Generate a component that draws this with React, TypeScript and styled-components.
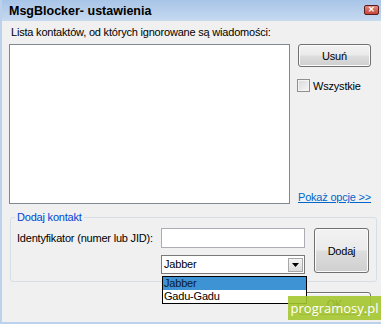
import React from "react";
import styled, { createGlobalStyle } from "styled-components";

const GlobalStyle = createGlobalStyle`
  html, body { margin: 0; padding: 0; background: #f0f0f0; }
  body { font-family: "Liberation Sans", Arial, sans-serif; font-size: 11px; color: #000; letter-spacing: -0.2px; }
  * { box-sizing: border-box; }
`;

const Window = styled.div`
  position: relative;
  width: 381px;
  height: 324px;
  background: #f0f0f0;
  border-left: 2px solid #bcd2ec;
  border-bottom: 2px solid #bcd2ec;
  display: flex;
  flex-direction: column;
  overflow: hidden;
`;

const TitleBar = styled.div`
  height: 21px;
  flex: none;
  background: linear-gradient(#a8c4e7, #c6daf0);
  display: flex;
  align-items: center;
  justify-content: space-between;
  padding: 0 0 0 7px;
  margin-left: -2px;
`;

const Title = styled.span`
  font-weight: bold;
  font-size: 12.5px;
  letter-spacing: 0;
  color: #000;
  padding-left: 2px;
`;

const CloseButton = styled.div`
  width: 15px;
  height: 10px;
  margin-right: 2px;
  margin-top: -2px;
  border: 1px solid #5a1c1c;
  border-radius: 2px;
  background: linear-gradient(#e08c7e, #c5463a);
  color: #fff;
  font-size: 8px;
  line-height: 8px;
  text-align: center;
  font-weight: bold;
`;

const Body = styled.div`
  flex: 1;
  display: flex;
  flex-direction: column;
  padding: 4px 4px 0 7px;
`;

const TopSection = styled.div`
  display: grid;
  grid-template-columns: 281px 1fr;
  grid-template-rows: auto 160px;
  row-gap: 5px;
`;

const Label = styled.div<{ $indent?: number }>`
  line-height: 14px;
  padding-left: ${(p) => p.$indent ?? 0}px;
  white-space: nowrap;
`;

const FieldLabel = styled(Label)`
  align-self: center;
`;

const ListBox = styled.div`
  grid-column: 1;
  grid-row: 2;
  background: #fff;
  border: 1px solid #828790;
`;

const SideColumn = styled.div`
  grid-column: 2;
  grid-row: 2;
  display: flex;
  flex-direction: column;
  padding-left: 8px;
`;

const Button = styled.div<{ $w: number; $h: number }>`
  width: ${(p) => p.$w}px;
  height: ${(p) => p.$h}px;
  border: 1px solid #707070;
  border-radius: 3px;
  background: linear-gradient(#f2f2f2 0%, #ebebeb 48%, #dddddd 52%, #cfcfcf 100%);
  box-shadow: inset 0 0 0 1px #fbfbfb;
  display: flex;
  align-items: center;
  justify-content: center;
  font-size: 11px;
`;

const AddButton = styled(Button)`
  grid-column: 4;
  grid-row: 1 / span 2;
`;

const CheckRow = styled.div`
  display: flex;
  align-items: center;
  margin-top: 12px;
  margin-left: -1px;
  gap: 3px;
`;

const CheckBox = styled.div`
  width: 13px;
  height: 13px;
  border: 1px solid #8e8f8f;
  background: linear-gradient(135deg, #d9d9d9, #f6f6f6);
  box-shadow: inset 0 0 0 1px #f4f4f4;
`;

const Link = styled.a`
  margin-top: auto;
  color: #0066cc;
  text-decoration: underline;
  line-height: 13px;
  white-space: nowrap;
`;

const GroupBox = styled.fieldset`
  margin: 7px 0 0 1px;
  padding: 0 7px 7px 4px;
  border: 1px solid #d5dfe5;
  border-radius: 3px;
  min-width: 0;
`;

const Legend = styled.legend`
  padding: 0 2px;
  color: #0046d5;
  line-height: 13px;
  font-size: 11px;
`;

const GroupGrid = styled.div`
  display: grid;
  grid-template-columns: 144px 144px 9px 55px;
  grid-template-rows: 20px 19px;
  row-gap: 7px;
  padding-top: 4px;
  padding-left: 2px;
`;

const TextInput = styled.div`
  background: #fff;
  border: 1px solid #abadb3;
`;

const Combo = styled.div`
  position: relative;
  grid-column: 2;
  grid-row: 2;
  background: #fff;
  border: 1px solid #7a7a7a;
  display: flex;
  align-items: center;
  justify-content: space-between;
  padding: 0 1px 0 2px;
  line-height: 13px;
`;

const ComboArrow = styled.div`
  width: 15px;
  height: 14px;
  border: 1px solid #a8a8a8;
  background: linear-gradient(#f4f4f4, #dcdcdc);
  display: flex;
  align-items: center;
  justify-content: center;
`;

const DropList = styled.div`
  position: absolute;
  left: 0;
  top: 20px;
  width: 145px;
  border: 1px solid #000;
  background: #fff;
  z-index: 2;
`;

const DropItem = styled.div<{ $selected?: boolean }>`
  height: 13px;
  line-height: 13px;
  padding-left: 1px;
  background: ${(p) => (p.$selected ? "#3d93d3" : "#fff")};
  color: ${(p) => (p.$selected ? "#0a1a2a" : "#000")};
`;

const Footer = styled.div`
  display: flex;
  justify-content: flex-end;
  padding: 10px 6px 0 0;
`;

const Watermark = styled.div`
  position: absolute;
  left: 286px;
  top: 296px;
  width: 93px;
  height: 24px;
  background: rgba(164, 197, 47, 0.9);
  color: #fff;
  font-family: "Open Sans", "Liberation Sans", sans-serif;
  font-size: 13px;
  line-height: 24px;
  text-align: center;
  letter-spacing: 0;
  z-index: 3;
`;

export default function App() {
  return (
    <>
      <GlobalStyle />
      <Window>
        <TitleBar>
          <Title>MsgBlocker- ustawienia</Title>
          <CloseButton>✕</CloseButton>
        </TitleBar>
        <Body>
          <TopSection>
            <Label $indent={2}>Lista kontaktów, od których ignorowane są wiadomości:</Label>
            <ListBox />
            <SideColumn>
              <Button $w={73} $h={23}>Usuń</Button>
              <CheckRow>
                <CheckBox />
                <span>Wszystkie</span>
              </CheckRow>
              <Link>Pokaż opcje &gt;&gt;</Link>
            </SideColumn>
          </TopSection>
          <GroupBox>
            <Legend>Dodaj kontakt</Legend>
            <GroupGrid>
              <FieldLabel>Identyfikator (numer lub JID):</FieldLabel>
              <TextInput />
              <AddButton $w={55} $h={45}>Dodaj</AddButton>
              <Combo>
                <span>Jabber</span>
                <ComboArrow>
                  <svg width="7" height="4" viewBox="0 0 7 4">
                    <path d="M0 0h7L3.5 4z" fill="#000" />
                  </svg>
                </ComboArrow>
                <DropList>
                  <DropItem $selected>Jabber</DropItem>
                  <DropItem>Gadu-Gadu</DropItem>
                </DropList>
              </Combo>
            </GroupGrid>
          </GroupBox>
          <Footer>
            <Button $w={73} $h={23}>OK</Button>
          </Footer>
        </Body>
        <Watermark>programosy.pl</Watermark>
      </Window>
    </>
  );
}
